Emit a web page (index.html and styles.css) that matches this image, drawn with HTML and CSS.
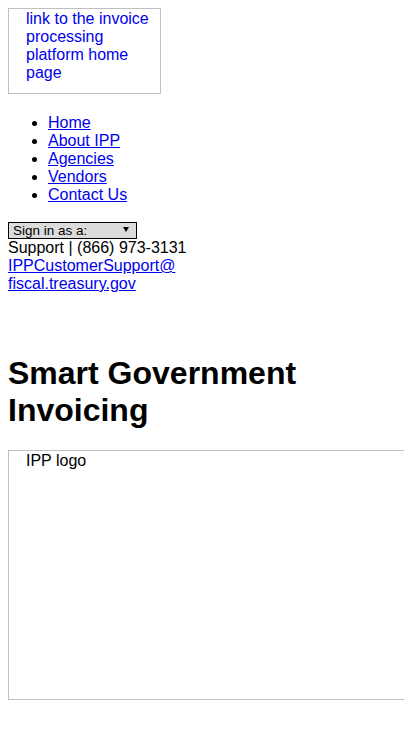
FILE: index.html
```html
<!DOCTYPE html>
<html>
<head>
<meta charset="utf-8">
<link rel="stylesheet" href="styles.css">
</head>
<body>
<header class="header">
  <a class="home-link" href="#"><span class="broken-img logo-small">link to the invoice processing platform home page</span></a>
  <ul class="nav">
    <li><a href="#">Home</a></li>
    <li><a href="#">About IPP</a></li>
    <li><a href="#">Agencies</a></li>
    <li><a href="#">Vendors</a></li>
    <li><a href="#">Contact Us</a></li>
  </ul>
  <div class="signin">
    <span class="signin-label">Sign in as a:</span>
    <svg class="signin-arrow" width="6" height="5" viewBox="0 0 6 5"><path d="M0 0H6L3 5Z" fill="#000"/></svg>
  </div>
  <div class="support">
    <div>Support | (866) 973-3131</div>
    <a href="#">IPPCustomerSupport@<br>fiscal.treasury.gov</a>
  </div>
</header>
<main class="main">
  <h1 class="title">Smart Government Invoicing</h1>
  <div class="broken-img logo-big">IPP logo</div>
</main>
</body>
</html>
```
FILE: styles.css
```css
body {
  margin: 8px;
  font-family: "Liberation Sans", Arial, sans-serif;
  font-size: 16px;
  line-height: 18px;
  color: #000;
  background: #fff;
}
a {
  color: #0000ee;
}
.home-link {
  display: block;
  text-decoration: none;
  color: #0000ee;
}
.broken-img {
  display: block;
  box-sizing: border-box;
  border: 1px solid #c0c0c0;
  padding: 1px 0 0 17px;
}
.logo-small {
  width: 153px;
  height: 86px;
}
.nav {
  margin: 20px 0 16px;
  padding-left: 40px;
}
.signin {
  display: flex;
  align-items: center;
  justify-content: space-between;
  box-sizing: border-box;
  width: 129px;
  height: 17px;
  border: 1px solid #000;
  background: #dcdcdc;
  padding: 0 7px 0 4px;
  font-size: 13.5px;
  margin-top: 18px;
}
.signin-label {
  line-height: 15px;
}
.signin-arrow {
  display: block;
  margin-bottom: 3px;
}
.support {
  line-height: 18px;
}
.main {
  padding-top: 40px;
}
.title {
  font-size: 32px;
  line-height: 37px;
  font-weight: bold;
  margin: 22px 0 21px;
}
.logo-big {
  width: calc(100vw - 8px);
  height: 250px;
  border-right: none;
}
```
